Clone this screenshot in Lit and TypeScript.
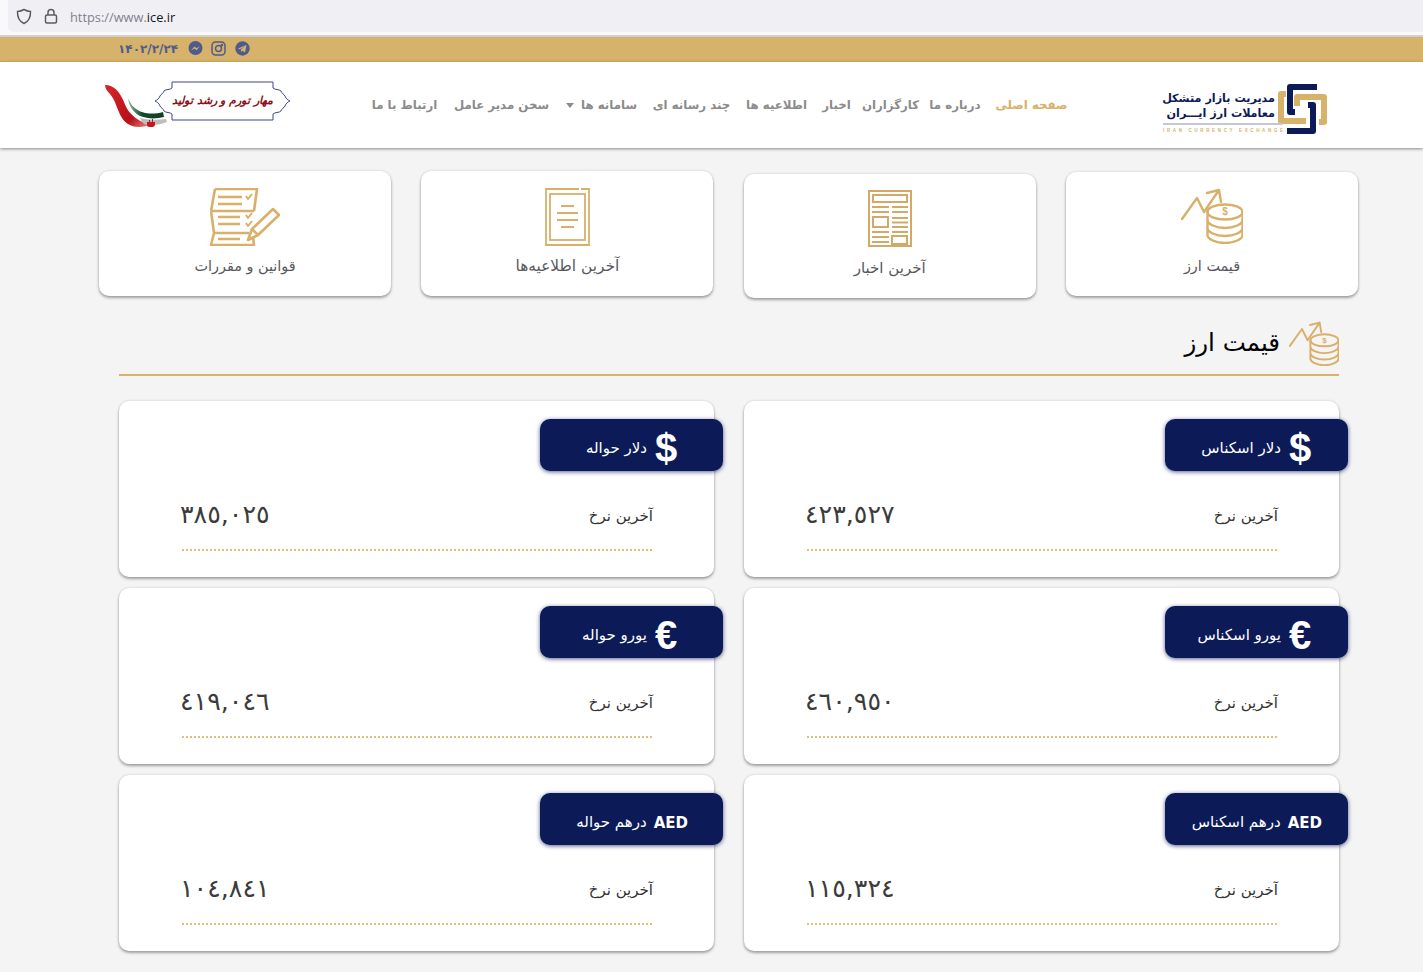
import { LitElement, html, css } from "lit";
import { customElement } from "lit/decorators.js";

const coinIcon = (w: number, h: number) => html`<svg width=${w} height=${h} viewBox="0 0 62 56" fill="none" stroke="#d8b06a" stroke-width="2.400" stroke-linejoin="round" stroke-linecap="round">
  <path d="M1 31 16 10l7 14L38 2M26 5l12-3 2 12"/>
  <ellipse cx="44" cy="24" rx="17.500" ry="7.500"/>
  <path d="M26.500 24v23c0 4 8 8 17.500 8s17.500-4 17.500-8V24M26.500 32c0 4 8 8 17.500 8s17.500-4 17.500-8M26.500 40c0 4 8 8 17.500 8s17.500-4 17.500-8"/>
  <text x="44" y="27" text-anchor="middle" font-size="10" font-weight="700" fill="#d8b06a" stroke="none" font-family="Liberation Sans">$</text>
</svg>`;

const newsIcon = html`<svg width="44" height="57" viewBox="0 0 44 57" fill="none" stroke="#d4a968" stroke-width="2">
  <rect x="1" y="1" width="42" height="55"/>
  <rect x="5" y="5" width="34" height="7"/>
  <path d="M4 17h17M24 17h16M4 22h17M24 22h16M24 28h16M24 32.500h16M24 37h16M4 42h17M24 42h16M4 47h17M4 52h17"/>
  <rect x="5" y="27" width="15" height="10"/>
  <rect x="24" y="46" width="15" height="8"/>
</svg>`;

const noticeIcon = html`<svg width="45" height="58" viewBox="0 0 45 58" fill="none" stroke="#d8b06a" stroke-width="1.800">
  <path d="M36 1h8v56H1V1h33"/>
  <rect x="5" y="6" width="35" height="46"/>
  <path d="M16 18h13M12 25h21M12 32h21M16 39h13" stroke-width="2"/>
</svg>`;

const rulesIcon = html`<svg width="70" height="58" viewBox="0 0 70 58" fill="none" stroke="#d8b06a" stroke-width="2.600" stroke-linejoin="round">
  <path d="M5 1h42l-3 22M1 23h43M5 1 1 23M1 23l3 22h35M4 45 1 57h43l-1-8"/>
  <path d="M8 9h24M8 16h24M8 29h22M8 36h22M8 51h22" stroke-width="2.600"/>
  <path d="M36 8l2 3 4-5M36 27l2 3 4-5M36 35l2 3 4-5" stroke-width="2"/>
  <path d="M38 52l4-11 21-20 6 6-21 20-10 5ZM42 41l6 6"/>
</svg>`;

const emblem = html`<svg width="49" height="50" viewBox="0 0 49 50" fill="none" stroke-linejoin="round">
  <path d="M8 10H3v27h25" stroke="#d6b26a" stroke-width="6"/>
  <path d="M19 22v-9h27v25h-5" stroke="#d6b26a" stroke-width="6"/>
  <path d="M17 28h-5V3h27" stroke="#0c1a57" stroke-width="6"/>
  <path d="M30 21h5v26H9" stroke="#0c1a57" stroke-width="6"/>
</svg>`;

const flag = html`<svg width="64" height="48" viewBox="0 0 64 48" fill="none">
  <defs>
    <linearGradient id="red" x1="0" y1="0" x2="1" y2="1"><stop offset="0" stop-color="#d8242a"/><stop offset=".7" stop-color="#b80f18"/><stop offset="1" stop-color="#e88"/></linearGradient>
    <linearGradient id="grn" x1="0" y1="0" x2="1" y2="0"><stop offset="0" stop-color="#8ab79a"/><stop offset=".4" stop-color="#0f4a29"/><stop offset="1" stop-color="#0e3f24"/></linearGradient>
  </defs>
  <path d="M1 2C10 2 16 9 20 19c3 9 10 18 26 23-12 4-22 2-28-7C13 27 12 18 6 11 3 8 1 5 1 2Z" fill="url(#red)"/>
  <path d="M24 15c3 8 8 12 14 14 6 2 14 2 21 0l1 5c-8 2-16 2-24-1-7-4-11-10-12-18Z" fill="url(#grn)"/>
  <path d="M36 35c7 2 16 2 26 1l1 3c-7 3-17 4-23 2-2-2-3-4-4-6Z" fill="#bbbebd"/>
  <path d="M45 37h1v7h-1ZM48 36h1v8h-1ZM43 39h8v3c-1 2-2 2-4 2s-4 0-4-2Z" fill="#c8141c"/>
</svg>`;

const frame = html`<svg class="frame" width="137" height="40" viewBox="0 0 137 40" fill="#fff" stroke="#3f4590" stroke-width="1">
  <path d="M18 1h101v6c2 2 6 1 8 3 1 3 3 3 4 5 1 3 3 4 5 5-2 1-4 2-5 5-1 2-3 2-4 5-2 2-6 1-8 3v6H18v-6c-2-2-6-1-8-3-1-3-3-3-4-5-1-3-3-4-5-5 2-1 4-2 5-5 1-2 3-2 4-5 2-2 6-1 8-3Z"/>
</svg>`;

type Card = { icon: string; cls: string; name: string; value: string };
const cards: Card[] = [
  { icon: "$", cls: "sym", name: "دلار اسکناس", value: "٤٢٣,٥٢٧" },
  { icon: "$", cls: "sym", name: "دلار حواله", value: "٣٨٥,٠٢٥" },
  { icon: "€", cls: "sym", name: "یورو اسکناس", value: "٤٦٠,٩٥٠" },
  { icon: "€", cls: "sym", name: "یورو حواله", value: "٤١٩,٠٤٦" },
  { icon: "AED", cls: "aed", name: "درهم اسکناس", value: "١١٥,٣٢٤" },
  { icon: "AED", cls: "aed", name: "درهم حواله", value: "١٠٤,٨٤١" },
];

const nav: [string, number][] = [
  ["صفحه اصلی", 73], ["درباره ما", 49], ["کارگزاران", 49], ["اخبار", 28], ["اطلاعیه ها", 61],
  ["چند رسانه ای", 78], ["سامانه ها", 71], ["سخن مدیر عامل", 98], ["ارتباط با ما", 65],
];

@customElement("app-root")
export class AppRoot extends LitElement {
  static styles = css`
    :host { display: block; min-height: 972px; background: #f4f4f4; font-family: "DejaVu Sans", "Noto Sans", sans-serif; }
    * { box-sizing: border-box; }
    .chrome { height: 37px; background: #f9f9fb; border-bottom: 2px solid #cfcfd4; padding-left: 8px; }
    .addr { height: 32px; background: #f0f0f4; border-radius: 0 0 0 5px; display: flex; align-items: center; padding: 0 0 0 8px; gap: 12px; }
    .url { font: 12.800px "Open Sans", sans-serif; color: #80808e; padding-top: 2px; }
    .url b { font-weight: 400; color: #15141a; }
    .top { height: 25px; background: #d6b26a; display: flex; align-items: center; padding: 0 0 2px 118px; gap: 9px; }
    .date { font-size: 12px; color: #4f5b8d; font-weight: 700; width: 61px; white-space: nowrap; }
    .ig { margin-left: -1px; }
    .header { height: 86px; background: #fff; box-shadow: 0 1px 3px rgba(0,0,0,.45); display: flex; direction: rtl; align-items: center; padding: 0 96px 0 104px; position: relative; }
    .brand { width: 164px; display: flex; align-items: flex-start; gap: 3px; margin-top: 8px; flex: none; height: 50px; }
    .brand-text { width: 112px; direction: rtl; color: #0c1a57; font-weight: 700; font-size: 11.200px; line-height: 15px; white-space: nowrap; padding-top: 7px; }
    .brand-rule { height: 2px; background: #c3c7d6; margin: 2px -8px 0 0; }
    .brand-en { direction: ltr; font: 700 4.500px "Liberation Sans", sans-serif; letter-spacing: 2.650px; color: #d6b26a; line-height: 7px; white-space: nowrap; margin: 2px -8px 0 0; }
    nav { display: flex; gap: 15.500px; margin-right: 95px; font-size: 11.800px; font-weight: 700; color: #8b8b8b; white-space: nowrap; flex: none; }
    nav span { display: flex; justify-content: center; align-items: center; }
    nav span:first-child { color: #d6b26a; }
    .caret { display: inline-block; width: 0; height: 0; border: 4px solid transparent; border-top: 5px solid #8b8b8b; border-bottom: 0; margin-right: 7px; }
    .slogan { margin-right: auto; width: 187px; height: 48px; position: relative; direction: ltr; display: flex; margin-top: 3px; flex: none; }
    .frame-wrap { position: absolute; left: 50px; top: -2px; width: 137px; height: 40px; }
    .frame-wrap span { position: absolute; inset: 0; text-align: center; font: italic 700 11px/39px "DejaVu Serif", "DejaVu Sans", serif; color: #8c0f18; direction: rtl; white-space: nowrap; }
    .frame { display: block; }
    .tiles { display: grid; grid-template-columns: repeat(4, 292px); column-gap: 30.330px; direction: rtl; padding: 23px 65px 0 0; justify-content: start; height: 174px; align-items: start; }
    .tile { background: #fff; border-radius: 10px; box-shadow: 0 2px 3px rgba(0,0,0,.32), 0 0 3px rgba(0,0,0,.14); height: 125px; display: flex; flex-direction: column; align-items: center; color: #57585c; font-size: 14.400px; padding-top: 17px; }
    .tile.a { margin-top: 1px; height: 124px; padding-top: 16px; }
    .tile.b { margin-top: 3px; height: 124px; padding-top: 16px; font-size: 15px; }
    .tile.n { font-size: 15.400px; }
    .tile .lbl { margin-top: 11px; line-height: 18px; }
    .tile.a .lbl { margin-top: 13px; }
    .tile.b .lbl { margin-top: 12px; }
    .section { padding: 0 84px 0 119px; direction: rtl; }
    .title { display: flex; align-items: center; gap: 9px; height: 55px; border-bottom: 2px solid #d6b26a; padding: 0 0 8px; margin-top: -1px; }
    .title h2 { margin: 0 0 2px; font-size: 24.500px; font-weight: 400; color: #000; line-height: 40px; }
    .grid { display: grid; grid-template-columns: 595px 595px; column-gap: 30px; row-gap: 11px; margin-top: 25px; }
    .card { position: relative; height: 176px; background: #fff; border-radius: 10px; box-shadow: 0 2px 3px rgba(0,0,0,.32), 0 0 3px rgba(0,0,0,.14); padding: 97px 62px 0 61px; }
    .badge { position: absolute; right: -9px; top: 18px; width: 183px; height: 52px; border-radius: 10px; background: #0c1a57; box-shadow: 0 1px 4px rgba(12,26,87,.7); color: #fff; display: flex; align-items: center; padding: 5px 26px 0 0; gap: 7px; font-size: 15px; white-space: nowrap; }
    .badge.alt { padding-right: 35px; }
    .sym { font: 700 40px/1 "Liberation Sans", sans-serif; width: 24px; text-align: center; margin: 0 10px 0 0; }
    .aed { font: 700 15px/1 "DejaVu Sans", sans-serif; margin-top: 3px; }
    .row { display: flex; justify-content: space-between; align-items: center; height: 34px; color: #333; margin-right: -1px; }
    .row .k { font-size: 15px; color: #333; margin-top: 1px; }
    .row .v { font-size: 25.300px; color: #3b3b3b; direction: ltr; margin-bottom: 2px; }
    .dots { height: 2px; margin: 17px 0 0; border-bottom: 2px dotted #e0bd78; width: 470px; }
  `;

  render() {
    return html`
      <div class="chrome"><div class="addr">
        <svg width="16" height="17" viewBox="0 0 16 17" fill="none" stroke="#5b5b66" stroke-width="1.500"><path d="M8 1.500c2 1.200 4.200 1.800 6.500 2 .2 5.500-1.500 9.800-6.500 12-5-2.200-6.700-6.500-6.500-12 2.300-.2 4.500-.8 6.500-2Z"/></svg>
        <svg width="14" height="16" viewBox="0 0 14 16" fill="none" stroke="#5b5b66" stroke-width="1.500"><rect x="1.500" y="7" width="11" height="8" rx="1.500"/><path d="M4 7V4.500a3 3 0 0 1 6 0V7"/></svg>
        <span class="url">https://www.<b>ice.ir</b></span>
      </div></div>
      <div class="top">
        <span class="date">۱۴۰۲/۲/۲۴</span>
        <svg width="15" height="15" viewBox="0 0 15 15"><circle cx="7.500" cy="7" r="7" fill="#4f5b8d"/><path d="M3 9.500 6.500 5.500l2 1.800 3.500-2-3.500 4-2-1.800Z" fill="#d6b26a"/></svg>
        <svg class="ig" width="15" height="15" viewBox="0 0 15 15" fill="none" stroke="#4f5b8d" stroke-width="1.500"><rect x="1" y="1" width="13" height="13" rx="3.500"/><circle cx="7.500" cy="7.500" r="3"/><circle cx="11" cy="4" r=".6" fill="#4f5b8d"/></svg>
        <svg width="15" height="15" viewBox="0 0 15 15"><circle cx="7.500" cy="7.500" r="7.200" fill="#4f5b8d"/><path d="M3 7.500 11.500 4l-1.500 7.500-2.500-1.800-1.300 1.300-.3-2.500 4-3-5 2.800Z" fill="#d6b26a"/></svg>
      </div>
      <header class="header">
        <div class="brand">
          ${emblem}
          <div class="brand-text">
            <div>مدیریت بازار متشکل</div>
            <div>معاملات ارز ایـــران</div>
            <div class="brand-rule"></div>
            <div class="brand-en">IRAN CURRENCY EXCHANGE</div>
          </div>
        </div>
        <nav>
          ${nav.map(([n, w]) => html`<span style="width:${w}px">${n}${n === "سامانه ها" ? html`<i class="caret"></i>` : ""}</span>`)}
        </nav>
        <div class="slogan">
          <span>${flag}</span>
          <div class="frame-wrap">${frame}<span>مهار تورم و رشد تولید</span></div>
        </div>
      </header>
      <div class="tiles">
        <div class="tile a">${coinIcon(62, 56)}<div class="lbl">قیمت ارز</div></div>
        <div class="tile b">${newsIcon}<div class="lbl">آخرین اخبار</div></div>
        <div class="tile n">${noticeIcon}<div class="lbl">آخرین اطلاعیه‌ها</div></div>
        <div class="tile">${rulesIcon}<div class="lbl">قوانین و مقررات</div></div>
      </div>
      <section class="section">
        <div class="title">${coinIcon(50, 45)}<h2>قیمت ارز</h2></div>
        <div class="grid">
          ${cards.map((c, i) => html`<div class="card">
            <div class="badge ${i % 2 ? "alt" : ""}"><span class=${c.cls}>${c.icon}</span><span>${c.name}</span></div>
            <div class="row"><span class="k">آخرین نرخ</span><span class="v">${c.value}</span></div>
            <div class="dots"></div>
          </div>`)}
        </div>
      </section>
    `;
  }
}
